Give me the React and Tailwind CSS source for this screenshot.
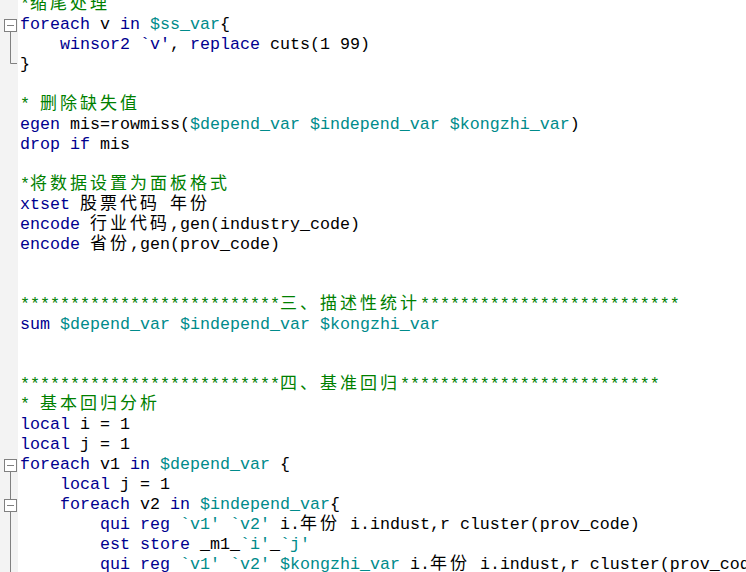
import React from "react";

const K = "k";
const M = "m";
const C = "c";
const T = "t";

const colors = {
  k: "text-[#00008f]",
  m: "text-[#008b8b]",
  c: "text-[#008000]",
  t: "text-black",
};

const stars = "*".repeat(26);

const lines = [
  { s: [[C, "*缩尾处理"]] },
  { g: "box", s: [[K, "foreach"], [T, " v "], [K, "in"], [T, " "], [M, "$ss_var"], [T, "{"]] },
  { g: "line", s: [[T, "    "], [K, "winsor2"], [T, " "], [K, "`v'"], [T, ", "], [K, "replace"], [T, " cuts(1 99)"]] },
  { g: "end", s: [[T, "}"]] },
  { s: [] },
  { s: [[C, "* 删除缺失值"]] },
  {
    s: [
      [K, "egen"], [T, " mis=rowmiss("], [M, "$depend_var"], [T, " "],
      [M, "$independ_var"], [T, " "], [M, "$kongzhi_var"], [T, ")"],
    ],
  },
  { s: [[K, "drop"], [T, " "], [K, "if"], [T, " mis"]] },
  { s: [] },
  { s: [[C, "*将数据设置为面板格式"]] },
  { s: [[K, "xtset"], [T, " 股票代码 年份"]] },
  { s: [[K, "encode"], [T, " 行业代码,gen(industry_code)"]] },
  { s: [[K, "encode"], [T, " 省份,gen(prov_code)"]] },
  { s: [] },
  { s: [] },
  { s: [[C, stars + "三、描述性统计" + stars]] },
  {
    s: [
      [K, "sum"], [T, " "], [M, "$depend_var"], [T, " "],
      [M, "$independ_var"], [T, " "], [M, "$kongzhi_var"],
    ],
  },
  { s: [] },
  { s: [] },
  { s: [[C, stars + "四、基准回归" + stars]] },
  { s: [[C, "* 基本回归分析"]] },
  { s: [[K, "local"], [T, " i = 1"]] },
  { s: [[K, "local"], [T, " j = 1"]] },
  { g: "box", s: [[K, "foreach"], [T, " v1 "], [K, "in"], [T, " "], [M, "$depend_var"], [T, " {"]] },
  { g: "line", s: [[T, "    "], [K, "local"], [T, " j = 1"]] },
  { g: "boxmid", s: [[T, "    "], [K, "foreach"], [T, " v2 "], [K, "in"], [T, " "], [M, "$independ_var"], [T, "{"]] },
  {
    g: "line",
    s: [
      [T, "        "], [K, "qui"], [T, " "], [K, "reg"], [T, " "], [M, "`v1'"], [T, " "],
      [M, "`v2'"], [T, " i.年份 i.indust,r cluster(prov_code)"],
    ],
  },
  {
    g: "line",
    s: [[T, "        "], [K, "est"], [T, " "], [K, "store"], [T, " _m1_"], [M, "`i'"], [T, "_"], [M, "`j'"]],
  },
  {
    g: "line",
    s: [
      [T, "        "], [K, "qui"], [T, " "], [K, "reg"], [T, " "], [M, "`v1'"], [T, " "],
      [M, "`v2'"], [T, " "], [M, "$kongzhi_var"], [T, " i.年份 i.indust,r cluster(prov_code)"],
    ],
  },
];

const isWide = (ch) => ch.charCodeAt(0) >= 0x2e80;

// ASCII runs stay as text, every CJK char takes a two-column cell
const renderText = (text) => {
  const out = [];
  let run = "";
  [...text].forEach((ch, i) => {
    if (isWide(ch)) {
      if (run) out.push(run);
      run = "";
      out.push(
        <span
          key={i}
          className="inline-block w-[20px] text-[17px] font-['Noto_Sans_CJK_SC',sans-serif] leading-[14px]"
        >
          {ch}
        </span>
      );
    } else {
      run += ch;
    }
  });
  if (run) out.push(run);
  return out;
};

const Fold = ({ type }) => {
  if (!type) return null;
  const stroke = "#808080";
  return (
    <svg width="18" height="20" viewBox="0 0 18 20">
      {type === "line" && <line x1="10.5" y1="0" x2="10.5" y2="20" stroke={stroke} />}
      {type === "end" && (
        <polyline points="10.5,0 10.5,10.5 17,10.5" fill="none" stroke={stroke} />
      )}
      {(type === "box" || type === "boxmid") && (
        <>
          {type === "boxmid" && <line x1="10.5" y1="0" x2="10.5" y2="6" stroke={stroke} />}
          <rect x="4.5" y="6.5" width="12" height="12" fill="white" stroke={stroke} />
          <line x1="7" y1="12.5" x2="14" y2="12.5" stroke={stroke} />
          <line x1="10.5" y1="18.5" x2="10.5" y2="20" stroke={stroke} />
        </>
      )}
    </svg>
  );
};

export default function App() {
  return (
    <div className="w-[746px] h-[572px] overflow-hidden bg-white">
      <div className="-mt-[7px] flex flex-col">
        {lines.map((line, i) => (
          <div key={i} className="flex h-[20px]">
            <div className="w-[18px] h-[20px] shrink-0 bg-[#f3f3f3]">
              <Fold type={line.g} />
            </div>
            <div className="pl-[2px] pt-[2px] whitespace-pre text-[16.667px] leading-[20px] font-['Liberation_Mono','Noto_Sans_CJK_SC',monospace]">
              {line.s.map(([kind, text], j) => (
                <span key={j} className={colors[kind]}>
                  {renderText(text)}
                </span>
              ))}
            </div>
          </div>
        ))}
      </div>
    </div>
  );
}
